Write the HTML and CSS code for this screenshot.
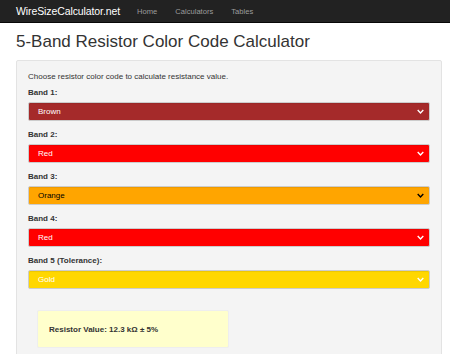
FILE: index.html
```html
<!DOCTYPE html>
<html>
<head>
<meta charset="utf-8">
<link rel="stylesheet" href="styles.css">
</head>
<body>
<nav class="navbar">
  <a class="brand">WireSizeCalculator.net</a>
  <a class="nav-link">Home</a>
  <a class="nav-link">Calculators</a>
  <a class="nav-link">Tables</a>
</nav>
<main class="container">
  <h1 class="title">5-Band Resistor Color Code Calculator</h1>
  <section class="well">
    <p class="intro">Choose resistor color code to calculate resistance value.</p>
    <div class="field">
      <label class="label">Band 1:</label>
      <div class="select brown"><span>Brown</span><svg class="chev" viewBox="0 0 10 6"><path d="M1 1 L5 5 L9 1" /></svg></div>
    </div>
    <div class="field">
      <label class="label">Band 2:</label>
      <div class="select red"><span>Red</span><svg class="chev" viewBox="0 0 10 6"><path d="M1 1 L5 5 L9 1" /></svg></div>
    </div>
    <div class="field">
      <label class="label">Band 3:</label>
      <div class="select orange"><span>Orange</span><svg class="chev" viewBox="0 0 10 6"><path d="M1 1 L5 5 L9 1" /></svg></div>
    </div>
    <div class="field">
      <label class="label">Band 4:</label>
      <div class="select red"><span>Red</span><svg class="chev" viewBox="0 0 10 6"><path d="M1 1 L5 5 L9 1" /></svg></div>
    </div>
    <div class="field">
      <label class="label">Band 5 (Tolerance):</label>
      <div class="select gold"><span>Gold</span><svg class="chev" viewBox="0 0 10 6"><path d="M1 1 L5 5 L9 1" /></svg></div>
    </div>
    <div class="result">Resistor Value: 12.3 kΩ ± 5%</div>
  </section>
</main>
</body>
</html>
```
FILE: styles.css
```css
* { box-sizing: border-box; }
html, body { margin: 0; padding: 0; }
body {
  font-family: "Liberation Sans", Arial, sans-serif;
  background: #fff;
  color: #333;
  width: 450px;
  height: 354px;
  overflow: hidden;
}
.navbar {
  height: 23px;
  background: #222;
  border-bottom: 1px solid #080808;
  display: flex;
  align-items: center;
  padding: 0 16px;
}
.brand {
  color: #fff;
  font-size: 10.5px;
  margin-right: 17px;
  letter-spacing: -0.1px;
}
.nav-link {
  color: #9d9d9d;
  font-size: 7.6px;
  margin-right: 18px;
}
.container {
  padding: 0 16px;
}
.title {
  font-weight: 400;
  font-size: 17px;
  color: #333;
  margin: 9px 0 8px 0;
  line-height: 20px;
}
.well {
  background: #f4f4f4;
  border: 1px solid #e3e3e3;
  border-radius: 2px;
  width: 426px;
  padding: 10px 11px 20px 11px;
}
.intro {
  font-size: 8px;
  margin: 0 0 4px 0;
  line-height: 12px;
}
.field {
  display: flex;
  flex-direction: column;
  gap: 3px;
  margin-bottom: 8px;
}
.label {
  font-size: 8px;
  font-weight: 700;
  line-height: 12px;
}
.select {
  height: 19px;
  border: 1px solid #ccc;
  border-radius: 2px;
  display: flex;
  align-items: center;
  justify-content: space-between;
  padding: 0 5px 0 9px;
  font-size: 8px;
  box-shadow: inset 0 1px 1px rgba(0,0,0,0.075);
}
.chev {
  width: 7px;
  height: 5px;
  fill: none;
  stroke: currentColor;
  stroke-width: 2;
}
.brown { background: #a52a2a; color: #fff; }
.red { background: #ff0000; color: #fff; }
.orange { background: #ffa500; color: #000; }
.gold { background: #ffd700; color: #fff; }
.result {
  margin: 21px 0 0 9px;
  width: 192px;
  height: 38px;
  background: #ffffcc;
  border: 1px solid #eee;
  border-radius: 2px;
  font-size: 8px;
  font-weight: 700;
  padding: 0 11px;
  display: flex;
  align-items: center;
}
```
